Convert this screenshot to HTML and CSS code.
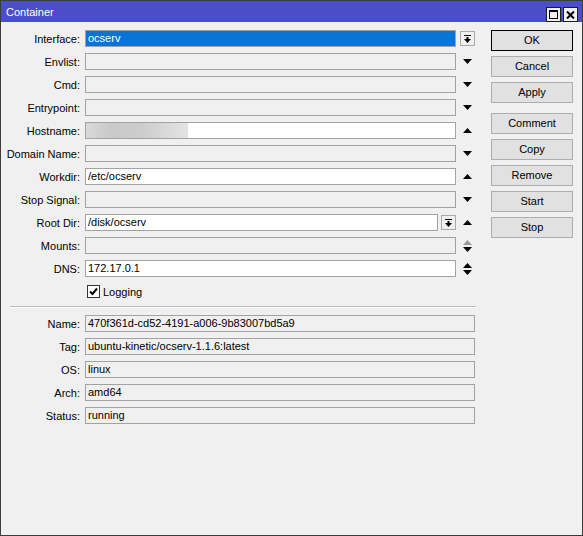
FILE: index.html
```html
<!DOCTYPE html>
<html>
<head>
<meta charset="utf-8">
<link rel="stylesheet" href="styles.css">
</head>
<body>
<div class="window">
  <div class="titlebar">
    <span class="title">Container</span>
    <div class="tbtns">
      <span class="tbtn"><svg width="9" height="9" viewBox="0 0 9 9"><rect x="0.5" y="0.5" width="8" height="8" fill="none" stroke="#000"/><rect x="0" y="0" width="9" height="2" fill="#000"/></svg></span>
      <span class="tbtn"><svg width="9" height="8" viewBox="0 0 9 8"><path d="M1 0.5L8 7.5M8 0.5L1 7.5" stroke="#000" stroke-width="2"/></svg></span>
    </div>
  </div>
  <div class="main">
    <div class="form">
      <div class="row"><span class="lbl">Interface:</span><div class="field sel">ocserv</div><div class="slot"><span class="ddbtn"><svg width="7" height="8" viewBox="0 0 7 8"><rect x="0" y="0" width="7" height="1"/><rect x="2.5" y="2" width="2" height="2"/><path d="M0 4h7L3.5 8z"/></svg></span></div></div>
      <div class="row"><span class="lbl">Envlist:</span><div class="field"></div><div class="slot"><svg width="9" height="5" viewBox="0 0 9 5"><path d="M0 0h9L4.5 5z"/></svg></div></div>
      <div class="row"><span class="lbl">Cmd:</span><div class="field"></div><div class="slot"><svg width="9" height="5" viewBox="0 0 9 5"><path d="M0 0h9L4.5 5z"/></svg></div></div>
      <div class="row"><span class="lbl">Entrypoint:</span><div class="field"></div><div class="slot"><svg width="9" height="5" viewBox="0 0 9 5"><path d="M0 0h9L4.5 5z"/></svg></div></div>
      <div class="row"><span class="lbl">Hostname:</span><div class="field w"><span class="blur"></span></div><div class="slot"><svg width="9" height="5" viewBox="0 0 9 5"><path d="M0 5h9L4.5 0z"/></svg></div></div>
      <div class="row"><span class="lbl">Domain Name:</span><div class="field"></div><div class="slot"><svg width="9" height="5" viewBox="0 0 9 5"><path d="M0 0h9L4.5 5z"/></svg></div></div>
      <div class="row"><span class="lbl">Workdir:</span><div class="field w">/etc/ocserv</div><div class="slot"><svg width="9" height="5" viewBox="0 0 9 5"><path d="M0 5h9L4.5 0z"/></svg></div></div>
      <div class="row"><span class="lbl">Stop Signal:</span><div class="field"></div><div class="slot"><svg width="9" height="5" viewBox="0 0 9 5"><path d="M0 0h9L4.5 5z"/></svg></div></div>
      <div class="row"><span class="lbl">Root Dir:</span><div class="combo"><div class="field w short">/disk/ocserv</div><span class="ddbtn"><svg width="7" height="8" viewBox="0 0 7 8"><rect x="0" y="0" width="7" height="1"/><rect x="2.5" y="2" width="2" height="2"/><path d="M0 4h7L3.5 8z"/></svg></span></div><div class="slot"><svg width="9" height="5" viewBox="0 0 9 5"><path d="M0 5h9L4.5 0z"/></svg></div></div>
      <div class="row"><span class="lbl">Mounts:</span><div class="field"></div><div class="slot"><svg width="9" height="12" viewBox="0 0 9 12"><path d="M0 5h9L4.5 0z" fill="#9a9a9a"/><path d="M0 7h9L4.5 12z"/></svg></div></div>
      <div class="row"><span class="lbl">DNS:</span><div class="field w">172.17.0.1</div><div class="slot"><svg width="9" height="12" viewBox="0 0 9 12"><path d="M0 5h9L4.5 0z"/><path d="M0 7h9L4.5 12z"/></svg></div></div>
      <div class="row"><span class="lbl"></span><span class="cb"><svg width="11" height="11" viewBox="0 0 11 11"><path d="M2 5.5L4.5 8L9 2.5" fill="none" stroke="#000" stroke-width="2"/></svg></span><span class="cbl">Logging</span></div>
      <div class="sep"></div>
      <div class="row"><span class="lbl">Name:</span><div class="field info">470f361d-cd52-4191-a006-9b83007bd5a9</div></div>
      <div class="row"><span class="lbl">Tag:</span><div class="field info">ubuntu-kinetic/ocserv-1.1.6:latest</div></div>
      <div class="row"><span class="lbl">OS:</span><div class="field info">linux</div></div>
      <div class="row"><span class="lbl">Arch:</span><div class="field info">amd64</div></div>
      <div class="row"><span class="lbl">Status:</span><div class="field info">running</div></div>
    </div>
    <div class="buttons">
      <div class="btn def">OK</div>
      <div class="btn">Cancel</div>
      <div class="btn grp">Apply</div>
      <div class="btn">Comment</div>
      <div class="btn">Copy</div>
      <div class="btn">Remove</div>
      <div class="btn">Start</div>
      <div class="btn">Stop</div>
    </div>
  </div>
</div>
</body>
</html>
```
FILE: styles.css
```css
* { box-sizing: border-box; }
html, body { margin: 0; padding: 0; }
body {
  width: 583px;
  height: 536px;
  font-family: "Liberation Sans", Arial, sans-serif;
  font-size: 11px;
  color: #000;
  background: #f0f0f0;
}
.window {
  width: 583px;
  height: 536px;
  border: 1px solid #3c3c3c;
  background: #f0f0f0;
  display: flex;
  flex-direction: column;
}
.titlebar {
  height: 21px;
  flex: none;
  background: #4a4fc8;
  color: #fff;
  display: flex;
  align-items: flex-start;
  padding: 0 4px 0 5px;
}
.title {
  flex: 1;
  line-height: 22px;
  font-size: 11px;
}
.tbtns {
  display: flex;
  gap: 2px;
  margin-top: 6px;
}
.tbtn {
  width: 15px;
  height: 15px;
  background: #f0f0f0;
  border: 1px solid #1e1e1e;
  display: flex;
  align-items: center;
  justify-content: center;
}
.main {
  display: flex;
  padding-top: 8px;
}
.form {
  width: 477px;
  flex: none;
}
.row {
  display: flex;
  align-items: center;
  height: 17px;
  margin-bottom: 6px;
}
.lbl {
  width: 79px;
  flex: none;
  text-align: right;
  margin-right: 5px;
  white-space: nowrap;
}
.field {
  width: 371px;
  height: 17px;
  flex: none;
  border: 1px solid #a2a2a2;
  background: #f0f0f0;
  padding-left: 2px;
  line-height: 15px;
  white-space: nowrap;
  overflow: hidden;
  position: relative;
}
.field.w { background: #fff; }
.field.sel { background: #0a74d6; color: #fff; }
.field.short { width: 353px; }
.field.info { width: 390px; }
.blur {
  display: block;
  width: 102px;
  height: 15px;
  margin-left: -2px;
  background: linear-gradient(to right, #d9d9d9 0%, #c9c9c9 25%, #cdcdcd 55%, #e4e4e4 100%);
}
.combo {
  display: flex;
  align-items: center;
  width: 371px;
  flex: none;
  gap: 3px;
}
.ddbtn {
  width: 15px;
  height: 15px;
  flex: none;
  border: 1px solid #a9a9a9;
  background: #f0f0f0;
  display: flex;
  align-items: center;
  justify-content: center;
}
.slot {
  width: 22px;
  flex: none;
  display: flex;
  align-items: center;
  justify-content: center;
}
.cb {
  width: 13px;
  height: 13px;
  margin-left: 2px;
  border: 1px solid #333;
  background: #fff;
  display: flex;
  align-items: center;
  justify-content: center;
}
.cbl { margin-left: 3px; }
.sep {
  margin: 0 0 7px 9px;
  width: 466px;
  height: 2px;
  border-top: 1px solid #b9b9b9;
  border-bottom: 1px solid #fff;
}
.buttons {
  margin-left: 13px;
  width: 82px;
  display: flex;
  flex-direction: column;
}
.btn {
  height: 21px;
  margin-bottom: 5px;
  border: 1px solid #adadad;
  background: #e1e1e1;
  text-align: center;
  line-height: 19px;
}
.btn.def { border-color: #000; }
.btn.grp { margin-bottom: 10px; }
```
